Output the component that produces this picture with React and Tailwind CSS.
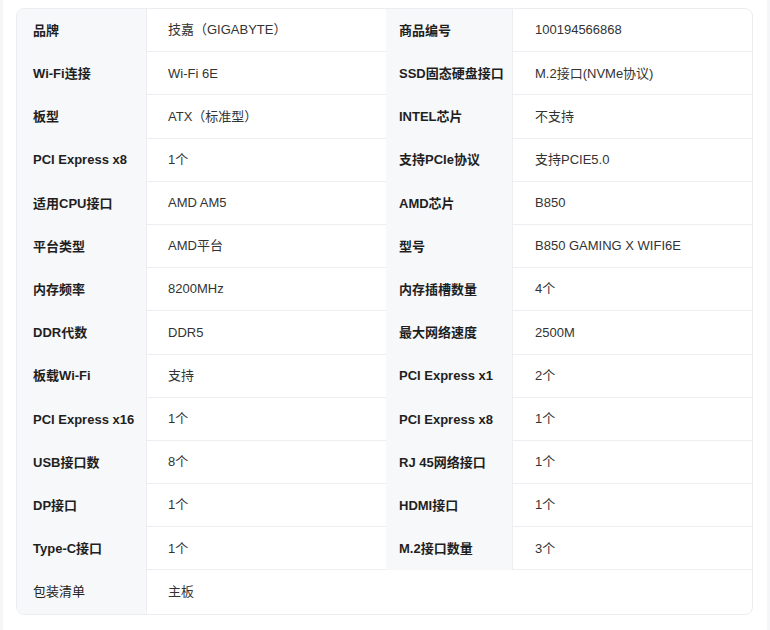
import React from "react";

const rows = [
  ["品牌", "技嘉（GIGABYTE）", "商品编号", "100194566868"],
  ["Wi-Fi连接", "Wi-Fi 6E", "SSD固态硬盘接口", "M.2接口(NVMe协议)"],
  ["板型", "ATX（标准型）", "INTEL芯片", "不支持"],
  ["PCI Express x8", "1个", "支持PCIe协议", "支持PCIE5.0"],
  ["适用CPU接口", "AMD AM5", "AMD芯片", "B850"],
  ["平台类型", "AMD平台", "型号", "B850 GAMING X WIFI6E"],
  ["内存频率", "8200MHz", "内存插槽数量", "4个"],
  ["DDR代数", "DDR5", "最大网络速度", "2500M"],
  ["板载Wi-Fi", "支持", "PCI Express x1", "2个"],
  ["PCI Express x16", "1个", "PCI Express x8", "1个"],
  ["USB接口数", "8个", "RJ 45网络接口", "1个"],
  ["DP接口", "1个", "HDMI接口", "1个"],
  ["Type-C接口", "1个", "M.2接口数量", "3个"],
];

export default function App() {
  return (
    <div
      className="w-[770px] h-[630px] bg-[#f5f6f8] px-[3px] text-[13px] text-[#333]"
      style={{ fontFamily: '"Liberation Sans", "Noto Sans CJK SC", sans-serif' }}
    >
      <div className="h-full bg-white pl-[13px] pr-[14px] pt-[8px]">
        <div className="border border-[#ebedf0] rounded-[8px] overflow-hidden">
          <div className="grid grid-cols-[130px_239px_127px_1fr] auto-rows-[43.2px]">
            {rows.map((r, i) => (
              <React.Fragment key={i}>
                <div className="bg-[#f7f8fa] border-r border-[#eceef1] pl-[16px] flex items-center font-bold text-[#1f1f1f]">
                  {r[0]}
                </div>
                <div className="border-b border-[#eceef1] pl-[21px] flex items-center">
                  {r[1]}
                </div>
                <div className="bg-[#f7f8fa] border-r border-[#eceef1] pl-[13px] flex items-center font-bold text-[#1f1f1f]">
                  {r[2]}
                </div>
                <div className="border-b border-[#eceef1] pl-[22px] flex items-center">
                  {r[3]}
                </div>
              </React.Fragment>
            ))}
            <div className="bg-[#f7f8fa] border-r border-[#eceef1] pl-[16px] flex items-center text-[#222]">
              包装清单
            </div>
            <div className="col-span-3 pl-[21px] flex items-center">主板</div>
          </div>
        </div>
      </div>
    </div>
  );
}
